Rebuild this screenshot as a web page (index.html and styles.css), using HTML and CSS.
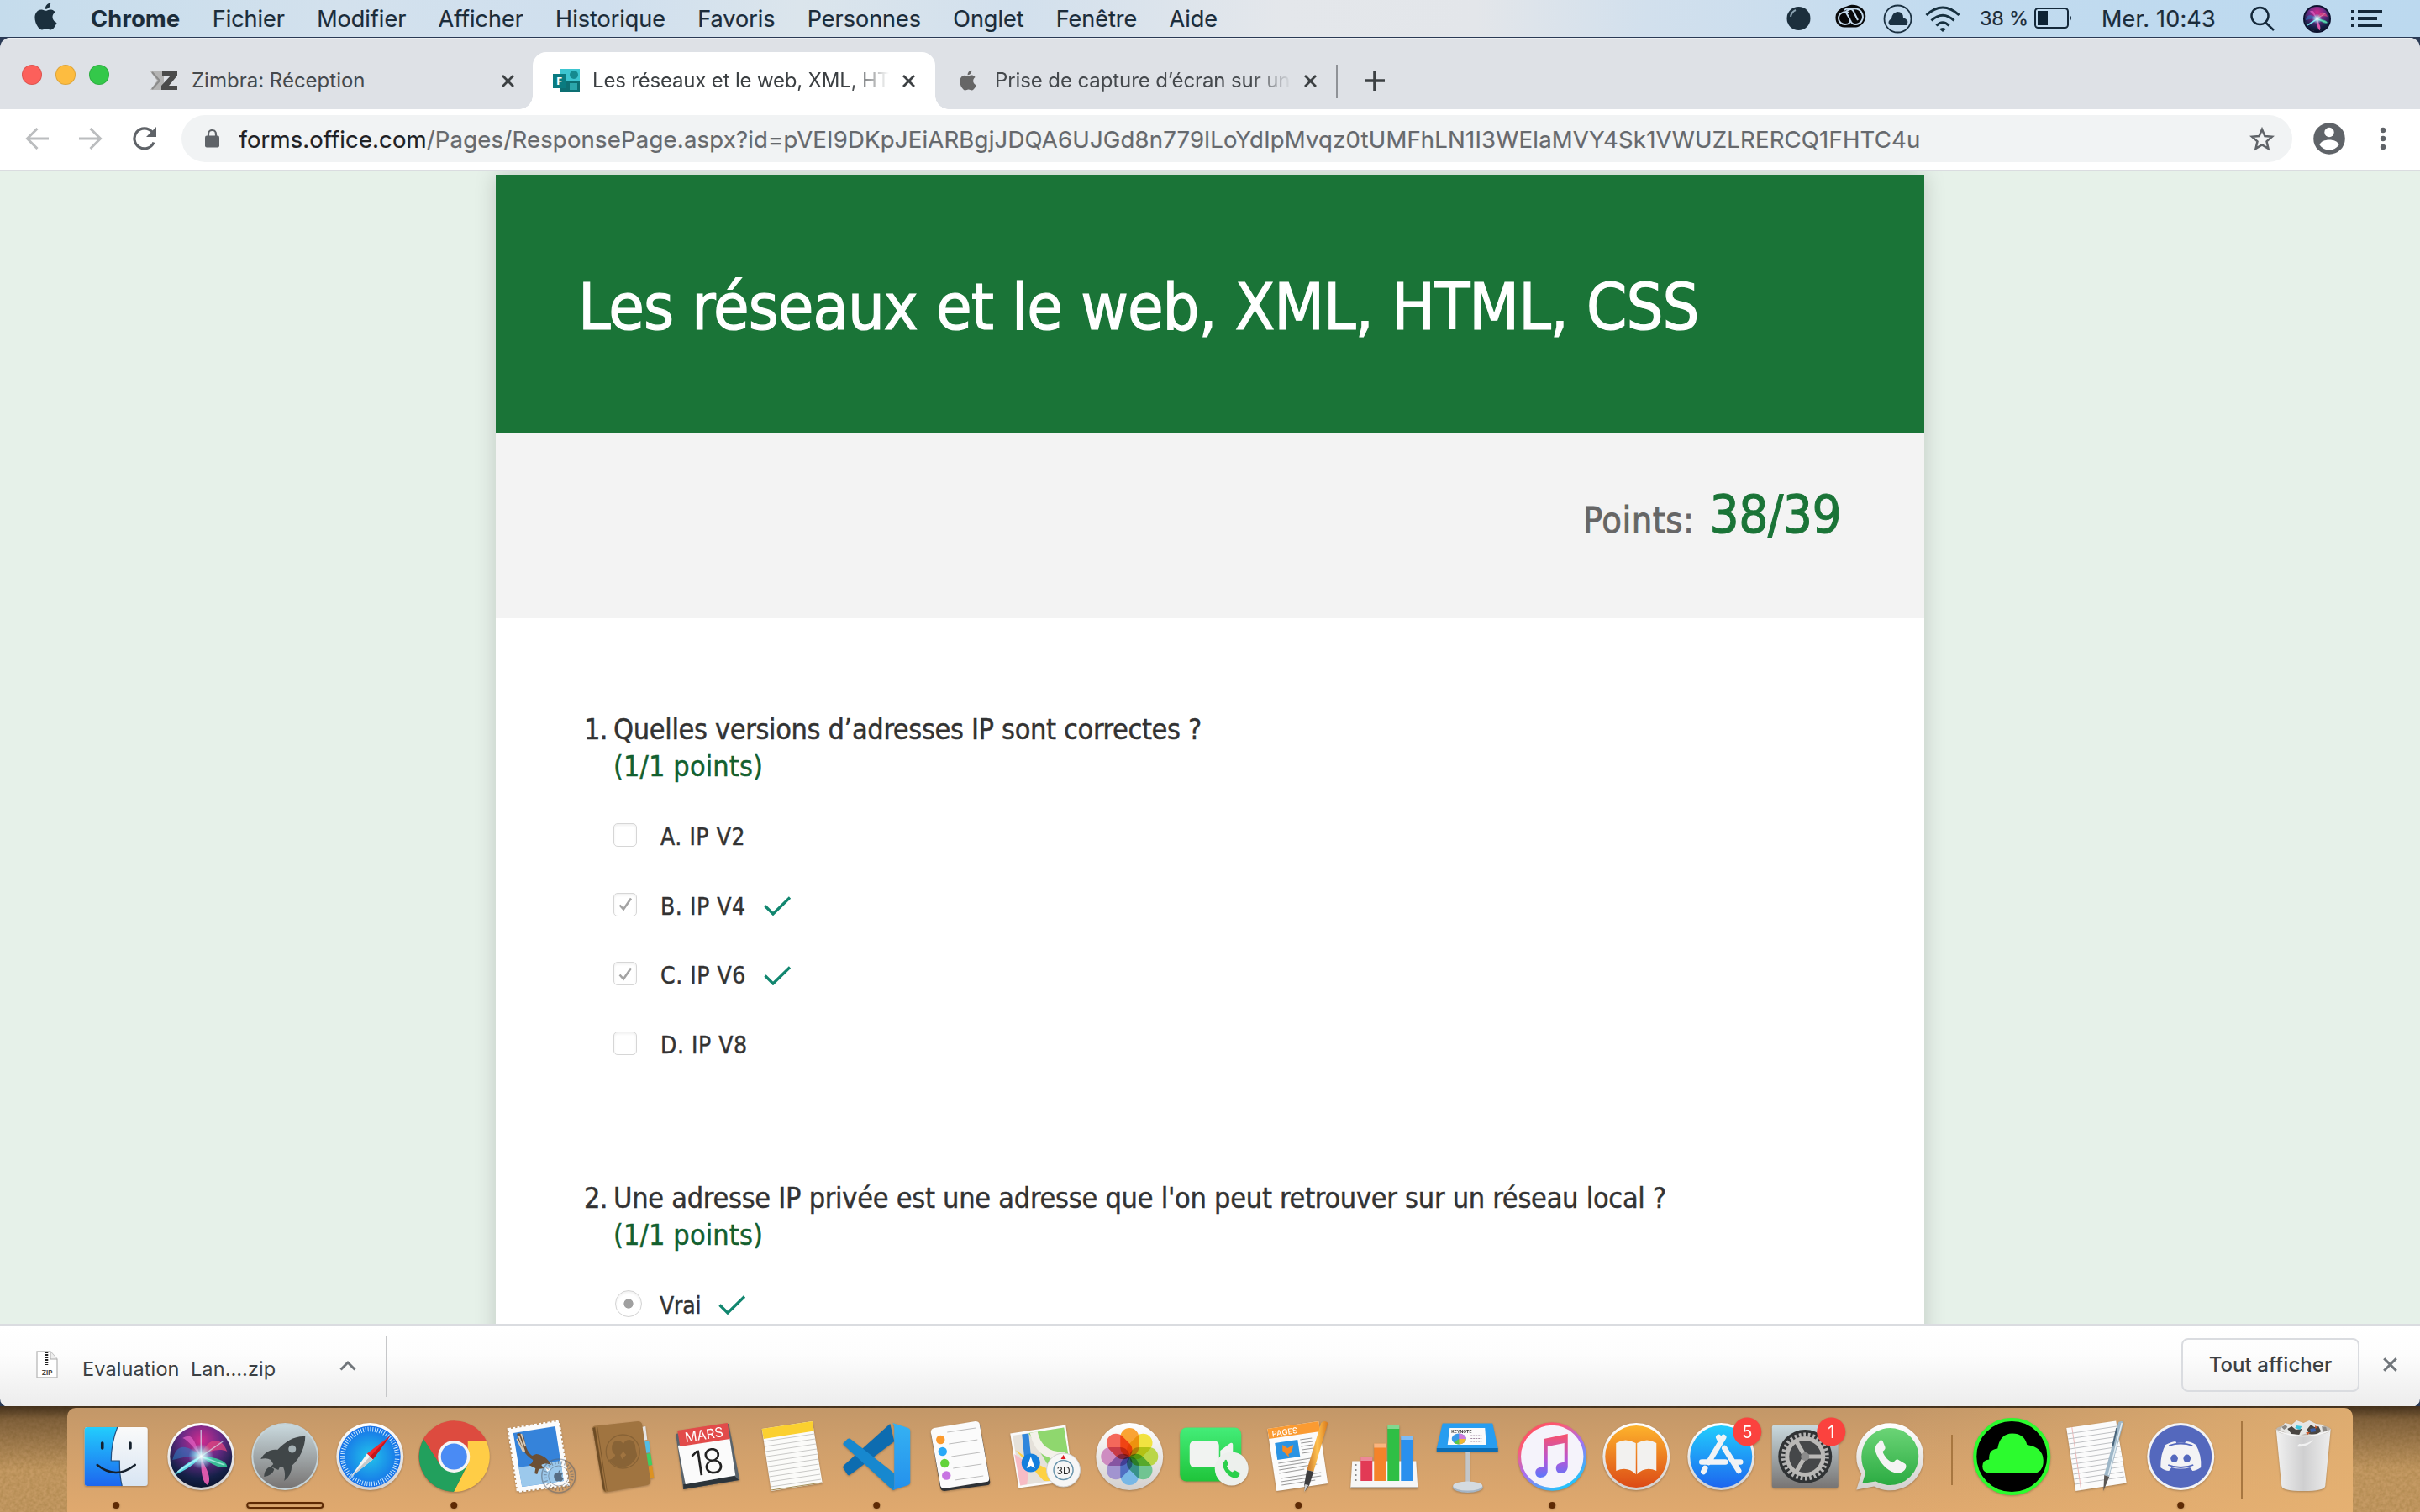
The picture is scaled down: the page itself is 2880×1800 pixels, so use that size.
FILE: index.html
```html
<!DOCTYPE html>
<html lang="fr">
<head>
<meta charset="utf-8">
<title>Les réseaux et le web, XML, HTML, CSS</title>
<link rel="stylesheet" href="styles.css">
</head>
<body>
<svg class="defs" width="0" height="0" aria-hidden="true">
  <defs>
    <path id="apple" d="M16.4 12.7c0-3 2.5-4.400 2.600-4.500-1.400-2.100-3.600-2.400-4.400-2.400-1.900-.2-3.700 1.100-4.600 1.100-1 0-2.400-1.100-4-1C3.900 5.900 2 7.100.9 9c-2.200 3.800-.6 9.400 1.600 12.500 1.100 1.500 2.300 3.200 4 3.100 1.600-.1 2.200-1 4.100-1s2.500 1 4.100 1c1.700 0 2.800-1.500 3.900-3.100 1.200-1.700 1.700-3.400 1.700-3.500 0 0-3.900-1.500-3.900-5.300zM13.300 3.600C14.100 2.500 14.700 1.100 14.500-.4c-1.200.1-2.800.8-3.600 1.900-.8.900-1.500 2.400-1.300 3.800 1.400.1 2.800-.7 3.700-1.700z"/>
    <path id="x" d="M2 2L15 15M15 2L2 15" fill="none" stroke="currentColor" stroke-width="2.800"/>
    <path id="tick" d="M1.500 11.500L11 21 31 1.500" fill="none" stroke="#11866f" stroke-width="3.300"/>
    <path id="phone" d="M-9-11c-3 2-4 5-2 10 3 7 8 13 15 15 4 1 8-1 9-4 .6-2 0-3-1-3.600l-5-3c-2-1-3 1-4.500 2.300-4-1.500-7-5-8.500-9 1-1 2.500-2 2-3.700l-2-5c-.5-1-2-1-3 0z"/>
    <linearGradient id="gBlue" x2="0" y2="1"><stop stop-color="#22cdfd"/><stop offset="1" stop-color="#1d66ef"/></linearGradient>
    <linearGradient id="gWhite" x2="0" y2="1"><stop stop-color="#fafafa"/><stop offset="1" stop-color="#d8e5f3"/></linearGradient>
    <linearGradient id="gGray" x2="0" y2="1"><stop stop-color="#c9d9de"/><stop offset="1" stop-color="#777473"/></linearGradient>
    <linearGradient id="gGreen" x2="0" y2="1"><stop stop-color="#43ed78"/><stop offset="1" stop-color="#1fc43a"/></linearGradient>
    <linearGradient id="gOrange" x2="0" y2="1"><stop stop-color="#fdb32c"/><stop offset="1" stop-color="#dc4a16"/></linearGradient>
    <linearGradient id="gWa" x2="0" y2="1"><stop stop-color="#6bd476"/><stop offset="1" stop-color="#2bab42"/></linearGradient>
    <linearGradient id="gRim" x2="0" y2="1"><stop stop-color="#fff"/><stop offset="1" stop-color="#d3d0ce"/></linearGradient>
    <linearGradient id="gRing" x2=".6" y2="1"><stop stop-color="#ff4b58"/><stop offset=".3" stop-color="#fb5b77"/><stop offset=".6" stop-color="#a96df0"/><stop offset="1" stop-color="#28c0fb"/></linearGradient>
    <linearGradient id="gNote" x2="0" y2="1"><stop stop-color="#f9526a"/><stop offset=".6" stop-color="#b456d8"/><stop offset="1" stop-color="#5b78fb"/></linearGradient>
    <linearGradient id="gCode" x2="0" y2="1"><stop stop-color="#35b2f3"/><stop offset="1" stop-color="#2490ec"/></linearGradient>
    <linearGradient id="gTrash"><stop stop-color="#f1f1f1"/><stop offset=".5" stop-color="#cfcfd0"/><stop offset="1" stop-color="#ededed"/></linearGradient>
    <linearGradient id="gPen"><stop stop-color="#c4742a"/><stop offset=".5" stop-color="#ffc14f"/><stop offset="1" stop-color="#d9791b"/></linearGradient>
    <radialGradient id="gSafari"><stop stop-color="#22c3ea"/><stop offset="1" stop-color="#1670e8"/></radialGradient>
    <radialGradient id="gSiri" cy=".25" r=".8"><stop stop-color="#d32c8e"/><stop offset=".4" stop-color="#6a2a86"/><stop offset=".75" stop-color="#152048"/><stop offset="1" stop-color="#081228"/></radialGradient>
    <radialGradient id="gGlow"><stop stop-color="#fff"/><stop offset=".4" stop-color="#bff" stop-opacity=".7"/><stop offset="1" stop-color="#7ef" stop-opacity="0"/></radialGradient>
    <g id="siri">
      <circle cx="50" cy="58" r="40" fill="url(#gRim)"/>
      <circle cx="50" cy="58" r="37" fill="url(#gSiri)"/>
      <path d="M50 58C30 40 20 45 16 62c8-2 22-6 34-4z" fill="#2a7fc4" opacity=".55"/>
      <path d="M50 58C40 36 40 30 28 36c6 2 14 12 22 22z" fill="#f06bd0" opacity=".6"/>
      <path d="M50 58c6-22 24-26 31-6-8-4-20-2-31 6z" fill="#e0467f" opacity=".75"/>
      <path d="M50 58c14 0 30 4 31 12-8 4-20-4-31-12z" fill="#37d59c" opacity=".85"/>
      <path d="M50 58c4 12 14 24 8 34-8-4-8-22-8-34z" fill="#ef5fb6" opacity=".9"/>
      <path d="M50 58C38 62 24 72 18 80c14-6 24-12 32-22z" fill="#5fe9f2" opacity=".9"/>
      <path d="M50 58L22 76M50 58L78 68M50 58L50 26M50 58L76 40" stroke="#d8ffff" stroke-width="1.500" opacity=".6"/>
      <circle cx="50" cy="58" r="15" fill="url(#gGlow)"/>
    </g>
  </defs>
</svg>

<div class="desktop">
  <header class="menubar">
    <svg class="menu-apple" width="28" height="36" viewBox="-.5 -1 22 27" fill="#1b2f3d"><use href="#apple"/></svg>
    <nav class="menus">
      <b class="app-name">Chrome</b><span>Fichier</span><span>Modifier</span><span>Afficher</span><span>Historique</span><span>Favoris</span><span>Personnes</span><span>Onglet</span><span>Fenêtre</span><span>Aide</span>
    </nav>
    <div class="status">
      <svg class="st-ball" width="29" height="30" viewBox="0 0 29 30"><circle cx="14.500" cy="15" r="14" fill="#1c2f3d"/><path d="M5 13q1-6 6-8" fill="none" stroke="#8da4b3" stroke-width="2"/></svg>
      <svg class="st-cc" width="39" height="30" viewBox="0 0 39 30"><path d="M15 2.500c5-3 12-2 16 1 5 3 7 8 6 13s-5 10-11 11H12C5 27 1 22 1.500 15 2 8 8 4 15 2.500z" fill="#08090a"/><g fill="none" stroke="#c4daec" stroke-width="2"><path d="M17 10c-6-2-12 1-12 7 0 4 4 7 8 7 5 0 7-3 5-7l-4-7"/><path d="M12 7c5-4 10-2 12 4l4 8M13 10c4-5 16-8 20 1 3 7-2 13-8 13-3 0-5-2-6-5"/></g></svg>
      <svg class="st-cloud" width="35" height="35" viewBox="0 0 35 35"><circle cx="17.500" cy="17.500" r="16" fill="none" stroke="#1b3142" stroke-width="1.800"/><path d="M8 25q-4-4 2-8 1-7 7-8 7 0 7 7 8 3 4 9z" fill="#1b3142"/></svg>
      <svg class="st-wifi" width="42" height="31" viewBox="0 0 42 31" fill="none" stroke="#16303f" stroke-width="3"><path d="M1.500 11Q21-7 40.500 11M7.500 17.500Q21 5 34.500 17.500M13.500 23.500Q21 16 28.500 23.500"/><path d="M17 27.500q4-3 8 0l-4 3.500z" fill="#16303f" stroke="none"/></svg>
      <span class="st-pct">38 %</span>
      <svg class="st-bat" width="46" height="26" viewBox="0 0 46 26"><rect x="1" y="1" width="39" height="23" rx="3.500" fill="none" stroke="#14283a" stroke-width="2"/><path d="M4 4h12v17H4z" fill="#0d2234"/><path d="M42 8.500q4 4 0 8z" fill="#14283a"/></svg>
      <span class="st-clock">Mer. 10:43</span>
      <svg class="st-search" width="29" height="30" viewBox="0 0 29 30" fill="none" stroke="#14283a" stroke-width="2.500"><circle cx="11.500" cy="12" r="10"/><path d="M18.500 20L28 29"/></svg>
      <svg class="st-siri" width="33" height="33" viewBox="9 17 82 82"><use href="#siri"/><circle cx="50" cy="58" r="38.500" fill="none" stroke="#0b1230" stroke-width="5"/></svg>
      <svg class="st-list" width="37" height="22" viewBox="0 0 37 22" fill="#14283a"><path d="M0 1h4v4H0zM8 1h29v4H8zM0 9h4v4H0zM8 9h23v4H8zM0 17h4v4H0zM8 17h29v4H8z"/></svg>
    </div>
  </header>

  <main class="window">
    <div class="tabstrip">
      <div class="lights"><i class="light red"></i><i class="light yellow"></i><i class="light green"></i></div>
      <div class="tab tab-one">
        <svg width="33" height="24" viewBox="0 0 33 24"><path d="M0 1h16v22H0l8-11z" fill="#b4b4b4"/><path d="M2 2l9 10-9 10" fill="none" stroke="#8b8b8b" stroke-width="2"/><path d="M14 1h18v5L22 18h10v5H13v-5L24 6H14z" fill="#4b4b4b"/></svg>
        <span class="tab-title">Zimbra: Réception</span>
        <svg class="tab-x" width="17" height="17"><use href="#x"/></svg>
      </div>
      <div class="tab tab-active">
        <svg width="32" height="28" viewBox="0 0 32 28"><path d="M8 0h24v14H8z" fill="#3dc5d0"/><path d="M8 14h24v14H8z" fill="#0d6f73"/><circle cx="25" cy="7" r="5" fill="#158a90"/><path d="M20 17h9v8h-9z" fill="#2ba6ab"/><path d="M0 6h16v17H0z" fill="#0a7b80"/><text x="4" y="19" class="forms-f">F</text></svg>
        <span class="tab-title faded">Les réseaux et le web, XML, HT</span>
        <svg class="tab-x" width="17" height="17"><use href="#x"/></svg>
      </div>
      <div class="tab tab-three">
        <svg width="21" height="26" viewBox="-.5 -1 22 27" fill="#666"><use href="#apple"/></svg>
        <span class="tab-title faded">Prise de capture d’écran sur un</span>
        <svg class="tab-x" width="17" height="17"><use href="#x"/></svg>
      </div>
      <i class="tab-rule"></i>
      <svg class="new-tab" width="24" height="24" viewBox="0 0 24 24"><path d="M12 0v24M0 12h24" stroke="#3c4043" stroke-width="3.600"/></svg>
    </div>

    <div class="toolbar">
      <svg width="28" height="26" viewBox="0 0 28 26" fill="none" stroke="#bbbdbf" stroke-width="3"><path d="M28 13H3M14.500 1L2.500 13l12 12"/></svg>
      <svg width="28" height="26" viewBox="0 0 28 26" fill="none" stroke="#bbbdbf" stroke-width="3"><path d="M0 13h25M13.500 1l12 12-12 12"/></svg>
      <svg width="28" height="28" viewBox="0 0 28 28"><path d="M25 18.500A12 12 0 1 1 23 6" fill="none" stroke="#5f6368" stroke-width="3.200"/><path d="M28 0v12H16z" fill="#5f6368"/></svg>
      <div class="omnibox">
        <svg width="17" height="22" viewBox="0 0 17 22"><rect y="7.500" width="17" height="14" rx="2" fill="#5f6368"/><path d="M4 9V5.500a4.500 4.500 0 0 1 9 0V9" fill="none" stroke="#5f6368" stroke-width="2.200"/></svg>
        <span class="url"><span class="host">forms.office.com</span>/Pages/ResponsePage.aspx?id=pVEI9DKpJEiARBgjJDQA6UJGd8n779lLoYdIpMvqz0tUMFhLN1I3WElaMVY4Sk1VWUZLRERCQ1FHTC4u</span>
        <svg class="star" width="30" height="29" viewBox="0 0 30 29"><path d="M15 3l3.400 8 8.600.8-6.500 5.600 2 8.500L15 21.400l-7.500 4.500 2-8.500L3 11.800l8.600-.8z" fill="none" stroke="#5f6368" stroke-width="2.500"/></svg>
      </div>
      <svg class="avatar" width="38" height="38" viewBox="0 0 38 38"><circle cx="19" cy="19" r="18.800" fill="#5f6368"/><circle cx="19" cy="11.500" r="5.700" fill="#fff"/><path d="M7.500 26.500c2-8 21-8 23 0a14 14 0 0 1-23 0z" fill="#fff"/></svg>
      <svg class="kebab" width="8" height="28" viewBox="0 0 8 28" fill="#5f6368"><circle cx="4" cy="4" r="3.200"/><circle cx="4" cy="14" r="3.200"/><circle cx="4" cy="24" r="3.200"/></svg>
    </div>

    <div class="page">
      <article class="form">
        <h1 class="form-title">Les réseaux et le web, XML, HTML, CSS</h1>
        <div class="score"><span class="score-label">Points:</span><span class="score-value">38/39</span></div>
        <div class="questions">
          <section class="question">
            <span class="num">1.</span>
            <div class="q-body">
              <div class="q-text q-one">Quelles versions d’adresses IP sont correctes ?</div>
              <div class="q-points">(1/1 points)</div>
              <ul class="options">
                <li><i class="box"></i><span class="opt">A. IP V2</span></li>
                <li><i class="box"><svg width="17" height="17" viewBox="0 0 17 17"><path d="M1.500 9.500l4.500 5L15 1.500" fill="none" stroke="#a3a3a3" stroke-width="2.600"/></svg></i><span class="opt">B. IP V4</span><svg width="33" height="23"><use href="#tick"/></svg></li>
                <li><i class="box"><svg width="17" height="17" viewBox="0 0 17 17"><path d="M1.500 9.500l4.500 5L15 1.500" fill="none" stroke="#a3a3a3" stroke-width="2.600"/></svg></i><span class="opt">C. IP V6</span><svg width="33" height="23"><use href="#tick"/></svg></li>
                <li><i class="box"></i><span class="opt">D. IP V8</span></li>
              </ul>
            </div>
          </section>
          <section class="question">
            <span class="num">2.</span>
            <div class="q-body">
              <div class="q-text">Une adresse IP privée est une adresse que l'on peut retrouver sur un réseau local ?</div>
              <div class="q-points">(1/1 points)</div>
              <ul class="options">
                <li><i class="radio"></i><span class="opt opt-word">Vrai</span><svg width="33" height="23"><use href="#tick"/></svg></li>
              </ul>
            </div>
          </section>
        </div>
      </article>
    </div>

    <footer class="downloads">
      <svg class="zip" width="26" height="33" viewBox="0 0 26 33"><path d="M1 1h16l8 9v22H1z" fill="#fff" stroke="#b9b9b9" stroke-width="1.300"/><path d="M17 1v9h8" fill="#eee" stroke="#aaa"/><path d="M12.500 1v16" stroke="#222" stroke-width="3.600" stroke-dasharray="2 1"/><text x="13" y="28.500" class="zip-t">ZIP</text></svg>
      <span class="file">Evaluation&nbsp; Lan….zip</span>
      <svg class="caret" width="20" height="13" viewBox="0 0 20 13"><path d="M1.500 11.500L10 3l8.500 8.500" fill="none" stroke="#70757a" stroke-width="3"/></svg>
      <i class="dl-rule"></i>
      <span class="show-all">Tout afficher</span>
      <svg class="dl-x" width="19" height="19" viewBox="0 0 17 17"><use href="#x"/></svg>
    </footer>
  </main>

  <div class="dock-area">
  <div class="dock">
    <svg class="ic" viewBox="0 0 100 124"><rect x="12.500" y="23" width="75" height="70" rx="3" fill="url(#gWhite)"/><path d="M15.500 23h36Q44 42 44 63h10q0 18 3 30H15.500a3 3 0 0 1-3-3V26a3 3 0 0 1 3-3z" fill="url(#gBlue)"/><path d="M51.500 23Q44 42 44 63h10q0 18 3 30" fill="none" stroke="#234e7d" stroke-width="1.200"/><path d="M33.500 42v6M66.700 42v6" stroke="#15202c" stroke-width="3.600" stroke-linecap="round"/><path d="M27.500 68q22 18 45 0" fill="none" stroke="#15202c" stroke-width="2.600" stroke-linecap="round"/><circle class="run" cx="50" cy="116" r="4"/></svg>
    <svg class="ic" viewBox="0 0 100 124"><use href="#siri"/></svg>
    <svg class="ic" viewBox="0 0 100 124"><circle cx="50" cy="58" r="40" fill="#c5d3d8"/><circle cx="50" cy="58" r="38" fill="url(#gGray)"/><path d="M74 34C62 33 50 40 41 50c-9-1-15 3-20 11q7-2 12 1l3 5-3 3 9 4 2-4 4 1q3 7 1 16 9-7 9-18C68 60 74 46 74 34z" fill="#404648"/><path d="M33 70c-5 1-8 6-8 12 6-1 11-4 12-9z" fill="#404648"/><circle cx="58.500" cy="49" r="4.500" fill="#a5b1b5"/><rect class="bounce" x="5" y="113" width="90" height="6" rx="3"/></svg>
    <svg class="ic" viewBox="0 0 100 124"><circle cx="50" cy="58" r="40" fill="url(#gRim)"/><circle cx="50" cy="58" r="36.500" fill="url(#gSafari)"/><circle cx="50" cy="58" r="32.500" fill="none" stroke="#d5efff" stroke-width="5.500" stroke-dasharray=".9 1.936"/><path d="M74.500 33L46.500 54.500l7 7z" fill="#f3262c"/><path d="M74.500 33L50 58l3.500 3.500z" fill="#c3151e"/><path d="M26.500 83L46.500 54.500l7 7z" fill="#f4f4f4"/><path d="M26.500 83L50 58l3.500 3.500z" fill="#c5c8ca"/></svg>
    <svg class="ic" viewBox="0 0 100 124"><circle cx="50" cy="58" r="42" fill="#dd4b3f"/><path d="M14 37A42 42 0 0 0 50 100L66.500 67.500 50 58 33.500 67.500z" fill="#22a05d"/><path d="M88 39A42 42 0 0 1 50 100L66.500 67.500V39z" fill="#ffcd46"/><path d="M50 39h38.500A42 42 0 0 0 14 37l19.500 30.500L50 58z" fill="#dd4b3f"/><circle cx="50" cy="58" r="19" fill="#f5f5f5"/><circle cx="50" cy="58" r="15.500" fill="#4a8bf4"/><circle class="run" cx="50" cy="116" r="4"/></svg>
    <svg class="ic" viewBox="0 0 100 124"><path d="M14 25.500L73.500 16 85 91.500 25 99.500z" fill="#fbfbfb" stroke="#fbfbfb" stroke-width="3" stroke-dasharray="3 2.200"/><path d="M19.500 30L69.500 22 79.500 87 30 94z" fill="#3583da"/><path d="M26 71l50-8 3.500 24L30 94z" fill="#9cc9ec"/><path d="M24 31c3-2 6 0 8 3l3 13c2 5 4 8 7 10l5-2c8 1 14 6 18 13-5-2-9-2-12 0l3 4-6 1-2 6-3-1 1-6-8-4c3-1 5-3 5-6-10-6-17-18-19-31z" fill="#6b4f35"/><path d="M26 33l7 19M29 31l5 15M24 37l8 16" stroke="#d8cab8" stroke-width="1.800"/><path d="M57 70l7 3-4 3z" fill="#fff"/><g fill="none" stroke="#566170" opacity=".5"><circle cx="73.500" cy="81" r="20" stroke-width="1.600"/><circle cx="73.500" cy="81" r="12" stroke-width="1"/><circle cx="73.500" cy="81" r="16" stroke-width="4" stroke-dasharray="1.300 2.600"/></g><g transform="translate(68 74) scale(.55)" fill="#46566a" opacity=".8"><use href="#apple"/></g></svg>
    <svg class="ic" viewBox="0 0 100 124"><path d="M72 23l5-1 2 16-5 1z" fill="#e6e6e6"/><path d="M75 40l6-1 2 14-6 1z" fill="#53bde4"/><path d="M77 55l6-1 2 14-6 1z" fill="#3fce60"/><path d="M79 70l6-1 2 14-6 2z" fill="#dc9222"/><path d="M14 24q0-2 3-2.500L68 16q4 0 5 4l10 67q0 4-4 5L30 100.500q-3 0-3.500-3z" fill="#a07440"/><path d="M14 24l3-1 12.500 77-3-3z" fill="#6d4c25"/><path d="M19.500 23L31 99" stroke="#7f5a2e"/><circle cx="50" cy="52" r="20" fill="none" stroke="#886336" stroke-width="1.300"/><path d="M33 62q7-2 8-6-5-3-4-11 2-7 8-6 6 1 6 8 0 6-4 9l2 5 5-5q-4-3-4-10 1-8 8-8 7 1 7 10l2 9q-5 12-17 14-10 0-17-9z" fill="#886336"/></svg>
    <svg class="ic" viewBox="0 0 100 124"><path d="M12 31L75 19 88 86 21 97z" fill="#59636b"/><path d="M21 91l61-10 5 5-66 11z" fill="#2c343a"/><path d="M14.500 45L76 36l7 44.500L23.500 91z" fill="#fbfbfb"/><path d="M14 27L73.500 18l3 19L17 46z" fill="#e24b4a"/><text transform="translate(46.500 37.500) rotate(-8.500)" class="cal-m">MARS</text><text transform="translate(50.500 79) rotate(-8.500)" class="cal-d">18</text></svg>
    <svg class="ic" viewBox="0 0 100 124"><path d="M14.500 25L74.500 16l12 73.500L25.500 99z" fill="#fbfbf9"/><path d="M14.500 25L74.500 16l2 11.500L16.500 37z" fill="#fbd02f"/><path d="M25 98l61-9" stroke="#a08a50"/><g stroke="#c9c9c7" stroke-width="1"><path d="M17 40l60-9M18 46l60-9M19 52l60-9M20 58l60-9M21 64l60-9M22 70l60-9M22.500 76l60-9M23 82l60-9M24 88l60-9M25 94l60-9"/></g></svg>
    <svg class="ic" viewBox="0 0 100 124"><path d="M10.500 72q-1-2 1-4L66 19l5 21-53 40q-2 1-3-1z" fill="#0d6cb0"/><path d="M10.500 44q-1-2 1-3l4-4q2-1 4 .5L71 78v20q-2 .5-4-2z" fill="#1788cf"/><path d="M69 18l18.500 6q2.500 1 2.500 3v62q0 2-2.500 3L69 98q2-2 2-5V24q0-4-2-6z" fill="url(#gCode)"/><circle class="run" cx="50" cy="116" r="4"/></svg>
    <svg class="ic" viewBox="0 0 100 124"><path d="M15 32q0-4 4-5l50-9q3 0 4 3l12 67q0 4-3 4l-51 7q-4 0-5-3z" fill="#2e3135"/><path d="M14.500 29q0-4 4-5l49-8q4 0 5 3l11.500 65q0 4-3 4l-50 8q-4 0-5-3z" fill="#fbfbfb"/><circle cx="26" cy="38" r="5.200" fill="#fc9a2c"/><circle cx="28.500" cy="52" r="5.200" fill="#29a9f8"/><circle cx="31" cy="66" r="5.200" fill="#62d33a"/><circle cx="33" cy="80.500" r="5.200" fill="#c774e2"/><path d="M34 29l34-5M36 43l34-5M39 58l34-5M41 72l34-5M43 86l34-5" stroke="#bdbdbd"/></svg>
    <svg class="ic" viewBox="0 0 100 124"><path d="M8 30.500L74 20.500l9 66L18 95.500z" fill="#fafafa"/><path d="M11 33L72 23.500 80.500 84 20 92.500z" fill="#e5e1da"/><path d="M30 30l42-6.500L78 62q-16-2-24 8z" fill="#8fd76e"/><path d="M36 29q6 30 38 28" fill="none" stroke="#f3f1ea" stroke-width="9"/><path d="M14 50l22 15 26 12v10H48z" fill="#fdd143"/><path d="M13 55l18 13-3 23-8 1.500z" fill="#f7bcc5"/><path d="M26 31l4 40" stroke="#2f86dc" stroke-width="8"/><circle cx="32.500" cy="65.500" r="11" fill="#147fdd"/><path d="M32.500 58l5 14-5-3-5 3z" fill="#fff"/><circle cx="71.300" cy="74" r="20" fill="#f6f6f6" stroke="#cfcfcf"/><circle cx="71.300" cy="74" r="11.500" fill="none" stroke="#6a95ad" stroke-width="1.500"/><path d="M71.300 56l3 5h-6z" fill="#e01b22"/><text x="71.300" y="78.500" class="map-t">3D</text></svg>
    <svg class="ic" viewBox="0 0 100 124"><circle cx="50" cy="58" r="40" fill="url(#gRim)"/><g class="petals"><rect x="39" y="24" width="22" height="34" rx="11" fill="#fa9a1e"/><rect x="39" y="24" width="22" height="34" rx="11" fill="#f1e02c" transform="rotate(45 50 58)"/><rect x="39" y="24" width="22" height="34" rx="11" fill="#b5d435" transform="rotate(90 50 58)"/><rect x="39" y="24" width="22" height="34" rx="11" fill="#64c18a" transform="rotate(135 50 58)"/><rect x="39" y="24" width="22" height="34" rx="11" fill="#6db4e8" transform="rotate(180 50 58)"/><rect x="39" y="24" width="22" height="34" rx="11" fill="#9a8ccf" transform="rotate(225 50 58)"/><rect x="39" y="24" width="22" height="34" rx="11" fill="#cb82bd" transform="rotate(270 50 58)"/><rect x="39" y="24" width="22" height="34" rx="11" fill="#f4584a" transform="rotate(315 50 58)"/></g></svg>
    <svg class="ic" viewBox="0 0 100 124"><rect x="9" y="23.500" width="73" height="64" rx="8" fill="url(#gGreen)"/><rect x="20.500" y="39" width="35" height="32" rx="6" fill="#f1f3f1"/><path d="M57 51l12-9q3-1 3 2v26L57 59z" fill="#f1f3f1"/><circle cx="70.500" cy="72.500" r="20" fill="#edf0ed"/><g transform="translate(69.500 72) scale(.8)" fill="#2bd04b"><use href="#phone"/></g></svg>
    <svg class="ic" viewBox="0 0 100 124"><path d="M13 25L74 16 85 90 24 99z" fill="#fbfbfb"/><path d="M13 25L74 16l2 12L15 37z" fill="#fb9b32"/><text transform="translate(19 34.500) rotate(-8.500)" class="pages-t">PAGES</text><path d="M22 42l27-4 3 20-27 4z" fill="#2a93e3"/><path d="M31 44l6 4 7-4-2 9-4 2 1 4-4-4-4-4z" fill="#f68a25"/><g stroke="#9a9a9a" stroke-width="1.200"><path d="M52 38l14-2M53 42l14-2M53 46l14-2M54 50l14-2M54 54l14-2M26 66l45-7M26 70l45-7M27 74l45-7M27 78l30-5M29 84l48-7M29 88l48-7M30 92l40-6"/></g><path d="M77 18q4-4 8 0L68 76l-8-2z" fill="url(#gPen)"/><path d="M60 74l8 2-5 16-5 7-1-8z" fill="#3c3c3e"/><path d="M58 91l4 1-5 8z" fill="#ccc"/><circle class="run" cx="50" cy="116" r="4"/></svg>
    <svg class="ic" viewBox="0 0 100 124"><path d="M13 63.500h76L91 95H11z" fill="#f6f6f6"/><path d="M11 94h80v2H11z" fill="#bdb6ae"/><path d="M23 58h14v29H23z" fill="#e23a55"/><path d="M39 42.500h14V87H39z" fill="#f5832a"/><path d="M55 21h14v66H55z" fill="#2fbf45"/><path d="M71 34h14v53H71z" fill="#2a90ee"/><path d="M23 58h14v5H23zM39 42.500h14v5H39zM55 21h14v4H55zM71 34h14v4H71z" fill="#fff" opacity=".4"/><path d="M17 67v24" stroke="#888" stroke-width="2.500" stroke-dasharray="2 4"/></svg>
    <svg class="ic" viewBox="0 0 100 124"><path d="M48 50h5v43h-5z" fill="#c3c6c9"/><ellipse cx="50.500" cy="94.500" rx="18" ry="6.500" fill="#a4b4c4"/><ellipse cx="50.500" cy="93" rx="17.500" ry="5.500" fill="#d4dbe1"/><path d="M20.500 18.500H80l6.500 30h-73z" fill="#279df0"/><path d="M13.500 48h73v4h-73z" fill="#0c6db4"/><path d="M31 23h42l2 29.500" fill="none"/><path d="M30 25h42l1.500 27.500" fill="none"/><path d="M28 24.500h43l2 29" fill="none"/><path d="M30 25.500h40l2 27" fill="none"/><path d="M29 24h42l1.500 20H26.500z" fill="#fbfbfb"/><text x="31" y="29.500" class="key-t">KEYNOTE</text><ellipse cx="40" cy="37" rx="8.500" ry="6.500" fill="#3a9ae8"/><path d="M40 37v-6.500a8.500 6.500 0 0 1 8.500 6.500z" fill="#d07ad8"/><path d="M40 37h8.500a8.500 6.500 0 0 1-8.500 6.500z" fill="#f2b632"/><path d="M40 43.500a8.500 6.500 0 0 1-6-2l6-4.500z" fill="#5ec644"/><path d="M54 33h13M54 36.500h13M54 40h13" stroke="#a08aa0" stroke-dasharray="2 1"/></svg>
    <svg class="ic" viewBox="0 0 100 124"><circle cx="50" cy="58" r="39" fill="#f5f3fb" stroke="url(#gRing)" stroke-width="3.600"/><path d="M40 37l28.500-6v39c0 5-4 8-8 8s-6-3-6-6c0-5 4-7 10-7V42l-20 4v29c0 5-4 8-8.500 8-4 0-6-3-6-6 0-5 5-7 10-7z" fill="url(#gNote)"/><circle class="run" cx="50" cy="116" r="4"/></svg>
    <svg class="ic" viewBox="0 0 100 124"><circle cx="50" cy="58" r="40" fill="url(#gRim)"/><circle cx="50" cy="58" r="37" fill="url(#gOrange)"/><path d="M26 42q11-7 23.500 0v37q-10-10-23.500-4zM51 42q12-7 23 0v33q-13-6-23 4z" fill="#f2f1ef"/></svg>
    <svg class="ic" viewBox="0 0 100 124"><circle cx="50" cy="58" r="40" fill="url(#gRim)"/><circle cx="50" cy="58" r="37" fill="url(#gBlue)"/><g stroke="#f1f3f5" stroke-width="6.500" stroke-linecap="round"><path d="M53 35L35 65M47 35l2 4M54 48l17 27M27 64.500h28M67 64.500h6M31 72l-2 4"/></g><circle cx="81" cy="28.500" r="17" class="badge"/><text x="81" y="35.500" class="badge-t">5</text></svg>
    <svg class="ic" viewBox="0 0 100 124"><rect x="10.500" y="20.500" width="79" height="75" rx="3" fill="url(#gGray)"/><circle cx="50" cy="58" r="32" fill="#303335"/><circle cx="50" cy="58" r="26" fill="none" stroke="#b4b4b4" stroke-width="5" stroke-dasharray="2.700 2.745"/><circle cx="50" cy="58" r="21.500" fill="#454749" stroke="#b9b8b6" stroke-width="5"/><path d="M50 58h22M50 58L39 39M50 58L39 77" stroke="#b9b8b6" stroke-width="5"/><circle cx="50" cy="58" r="5" fill="#8b8b8b"/><circle cx="81" cy="28.500" r="17" class="badge"/><text x="81" y="35.500" class="badge-t">1</text></svg>
    <svg class="ic" viewBox="0 0 100 124"><path d="M10 97.500l6-19q-6-9-6-20a40 40 0 1 1 21 35z" fill="url(#gRim)"/><path d="M17 90l4-13q-5-8-5-19a34 34 0 1 1 17 29.500z" fill="url(#gWa)"/><g transform="translate(50 57) scale(1.450)" fill="#f4f4f4"><use href="#phone"/></g></svg>
    <i class="dock-rule short"></i>
    <svg class="ic" viewBox="0 0 100 124"><circle cx="50" cy="58" r="44" fill="#000" stroke="#2cfb2e" stroke-width="4"/><path d="M23 78q-8-1-8-8.500t8-8q-1-12 10-13 3-18 17.500-18T68 44q19 3 19.500 18T75 78z" fill="#2cfb2e"/></svg>
    <svg class="ic" viewBox="0 0 100 124"><path d="M14 24L73 15.500l12.500 74L25 99z" fill="#fbfbfb"/><path d="M20.500 23l11 75" stroke="#f0b9b9"/><g stroke="#bfc1c4" stroke-width="1.100"><path d="M15 31l59-9M16 37l59-9M17 43l59-9M18 49l59-9M19 55l59-9M20 61l59-9M21 67l59-9M21.500 73l59-9M22 79l59-9M23 85l59-9M24 91l59-9"/></g><path d="M76 17q3-2 6 0L65 82l-6-2z" fill="#9eb7c8"/><path d="M80 18L64 80" stroke="#e3edf3" stroke-width="1.500"/><path d="M74 24l-5 22" stroke="#49647a" stroke-width="2"/><path d="M59 80l6 2-7 17z" fill="#5b5754"/></svg>
    <svg class="ic" viewBox="0 0 100 124"><circle cx="50" cy="58" r="40" fill="#f3f3f5"/><circle cx="50" cy="58" r="37" fill="#5468bd"/><path d="M32 44q8-4 12-4l1 2q5-1 10 0l1-2q6 0 12 4 7 12 6 27-6 4-10 4l-3-4q-11 3-22 0l-3 4q-5 0-10-4 0-17 6-27z" fill="#f3f3f5"/><path d="M36 45q14-5 28 0M35 68q15 6 30 0" fill="none" stroke="#5468bd" stroke-width="1.800"/><ellipse cx="42.300" cy="60.300" rx="4.300" ry="4.800" fill="#5468bd"/><ellipse cx="57.500" cy="60.300" rx="4.300" ry="4.800" fill="#5468bd"/><circle class="run" cx="50" cy="116" r="4"/></svg>
    <i class="dock-rule"></i>
    <svg class="ic" viewBox="0 0 100 124"><path d="M17.500 25h65L76 93q-1 6-26 6t-26-6z" fill="url(#gTrash)"/><ellipse cx="50" cy="26" rx="32.500" ry="7" fill="#bdb6ae"/><path d="M22 26l6-8 8 2 6-5 8 3 7-3 8 4 8 1 5 7-9 5-14-2-10 3-12-1z" fill="#e6e6e4"/><path d="M31 25l5-3 5 4 7-1-3 7-9-1zM54 26l5-6 4 3 5-1 3 6-6 4-8-1z" fill="#4a4642"/><path d="M24 23l5-3 2 3-4 3zM72 22l5 1 1 4-5 2z" fill="#8b8884"/><path d="M42 21l6 1-2 4-6-2z" fill="#3cc4dc"/><path d="M58 25l6-1 1 4-6 1z" fill="#3a5fa8"/><path d="M53 29l5 0-3 3zM64 21l3 2-3 2z" fill="#c9572a"/><path d="M42 46q12 2 20-8-8 6-17 5z" fill="#fff" opacity=".7"/><path d="M18 27q32 13 64 0" fill="none" stroke="#f5f5f5" stroke-width="1.500"/></svg>
  </div>
  </div>
</div>
</body>
</html>
```
FILE: styles.css
```css
* { box-sizing: border-box; }
body { margin: 0; font-family: Inter, "Liberation Sans", sans-serif; color: #3c4043; }
svg { display: block; flex: none; }
.defs { position: absolute; }
i { display: block; flex: none; }

.desktop { width: 2880px; height: 1800px; overflow: hidden; display: flex; flex-direction: column; background: #2a3a55; }

/* macOS menu bar */
.menubar {
  height: 44px; flex: none; display: flex; align-items: center; padding: 0 45px 0 41px;
  background: linear-gradient(90deg, #c5dcec 0, #d3e1ed 14%, #cfdfee 25%, #dbe5ec 33%, #d2e0ed 42%, #e4e7eb 53%, #e3e6ea 61%, #d2e0ed 68%, #c2dbef 80%, #bcd9ef 100%);
  color: #1b2c3a; font-size: 27px; line-height: 44px; white-space: nowrap;
}
.menu-apple { margin: -4px 39px 0 0; }
.menus { display: flex; gap: 38.200px; padding-top: 1px; -webkit-text-stroke: .2px #1b2c3a; }
.app-name { font-weight: 700; letter-spacing: .35px; }
.status { margin-left: auto; display: flex; align-items: center; -webkit-text-stroke: .2px #1b2c3a; }
.st-ball { -webkit-text-stroke: 0; }
.st-cc { margin-left: 28px; margin-top: -4px; }
.st-cloud { margin-left: 19px; }
.st-wifi { margin-left: 15px; }
.st-pct { margin-left: 23px; width: 65px; font-size: 23.5px; letter-spacing: -.2px; }
.st-clock { margin: 1px 0 0 34px; width: 137px; letter-spacing: .2px; }
.st-search { margin-left: 40px; }
.st-siri { margin-left: 34px; }
.st-list { margin-left: 24px; }

/* Browser window */
.window { height: 1630px; flex: none; display: flex; flex-direction: column; margin-top: 1px; overflow: hidden; border-radius: 12px 12px 10px 10px; }
.tabstrip { height: 85px; flex: none; display: flex; align-items: flex-end; background: #dee1e6; border-top: 2px solid #eef0f2; }
.lights { display: flex; gap: 16px; padding: 0 0 29px 26px; width: 179px; }
.light { width: 24px; height: 24px; border-radius: 50%; border: 1px solid rgba(0, 0, 0, .12); }
.red { background: #fc605b; }
.yellow { background: #fdbc40; }
.green { background: #34c84a; }
.tab { height: 68px; display: flex; align-items: center; font-size: 24px; line-height: 68px; color: #45494d; white-space: nowrap; }
.tab-one { width: 455px; }
.tab-one .tab-title { margin-left: 16px; width: 368px; }
.tab-active { position: relative; width: 479px; padding-left: 24px; background: #fff; border-radius: 16px 16px 0 0; color: #3c4043; }
.tab-active::before, .tab-active::after { content: ""; position: absolute; bottom: 0; width: 16px; height: 16px; }
.tab-active::before { left: -16px; background: radial-gradient(circle at 0 0, transparent 15.500px, #fff 16px); }
.tab-active::after { right: -16px; background: radial-gradient(circle at 100% 0, transparent 15.500px, #fff 16px); }
.tab-active .tab-title { margin-left: 15px; width: 353px; letter-spacing: -.18px; }
.tab-active .tab-x { margin-left: 15px; }
.tab-three { width: 477px; padding-left: 29px; }
.tab-three .tab-title { margin-left: 21px; width: 353px; letter-spacing: -.1px; }
.tab-three .tab-x { margin-left: 14px; }
.faded { -webkit-mask-image: linear-gradient(90deg, #000 87%, transparent); mask-image: linear-gradient(90deg, #000 87%, transparent); }
.tab-x { color: #3c4043; }
.tab-rule { width: 2px; height: 40px; background: #8f9297; margin-bottom: 13px; }
.new-tab { margin: 0 0 22px 32px; }
.forms-f { font: 700 13px "Open Sans", sans-serif; fill: #fff; }

.toolbar { height: 74px; flex: none; display: flex; align-items: center; padding: 0 40px 2px 30px; gap: 36px; background: #fff; border-bottom: 2px solid #dadce0; }
.toolbar > svg:nth-child(3) { margin-right: -6px; }
.omnibox { width: 2512px; height: 56px; flex: none; border-radius: 28px; background: #f1f3f4; display: flex; align-items: center; padding: 0 21px 0 28px; }
.url { margin: 1px 0 0 23.500px; font-size: 27.500px; line-height: 56px; letter-spacing: .21px; color: #66696d; white-space: nowrap; -webkit-text-stroke: .2px currentColor; }
.host { color: #202124; letter-spacing: .1px; }
.star { margin-left: auto; }
.avatar { margin-left: -11px; }
.kebab { margin-left: 5px; }

/* Quiz page */
.page { height: 1372px; flex: none; overflow: hidden; background: #e6f1e9; padding-top: 4px; display: flex; justify-content: center; font-family: "DejaVu Sans Condensed", "DejaVu Sans", sans-serif; font-stretch: condensed; -webkit-text-stroke: .45px currentColor; }
.form { width: 1700px; height: 1500px; background: #fff; box-shadow: 0 0 24px rgba(0, 0, 0, .17); color: #333; }
.form-title { margin: 0; height: 308px; padding: 7px 0 0 98px; background: #1a7437; color: #fff; font-size: 77px; font-weight: 400; line-height: 301px; letter-spacing: -.98px; word-spacing: 1.200px; white-space: nowrap; -webkit-text-stroke: 1.200px #fff; }
.score { height: 220px; background: #f3f3f3; display: flex; justify-content: flex-end; align-items: baseline; gap: 18px; padding: 57px 99px 0 0; line-height: 80px; }
.score-label { font-size: 43px; color: #666; letter-spacing: .5px; -webkit-text-stroke-width: .8px; }
.score-value { font-size: 61.500px; color: #1a7437; letter-spacing: -.6px; -webkit-text-stroke-width: 1px; }
.questions { padding: 110px 0 0 105px; }
.question { height: 558px; display: flex; font-size: 34px; line-height: 44px; white-space: nowrap; }
.num { width: 35px; letter-spacing: -.8px; }
.q-text { letter-spacing: -.27px; }
.q-one { letter-spacing: -.35px; }
.q-points { color: #13602f; letter-spacing: .1px; }
.options { list-style: none; margin: 21px 0 0; padding: 0; font-size: 28px; }
.options li { height: 82.700px; display: flex; align-items: center; }
.options li > svg { margin: -1px 0 0 21px; }
.box { width: 28px; height: 28px; margin-top: -5px; border: 1.500px solid #d6d6d6; border-radius: 5px; box-shadow: inset 0 2px 3px rgba(0, 0, 0, .06); display: flex; align-items: center; justify-content: center; }
.radio { width: 32px; height: 32px; margin: -4px 0 0 2px; border: 1.500px solid #d3d3d3; border-radius: 50%; background: radial-gradient(circle, #a0a0a0 5.200px, #fff 6px); box-shadow: inset 0 2px 3px rgba(0, 0, 0, .06); }
.opt { margin: 1px 0 0 28px; letter-spacing: .55px; }
.radio + .opt { margin-left: 21px; letter-spacing: -.2px; }

/* Download shelf */
.downloads { flex: 1; display: flex; align-items: center; padding: 0 26px 0 43px; border-top: 2px solid #dadce0; background: linear-gradient(#fff, #fdfdfd 35%, #ececec); }
.zip { margin-top: -4px; }
.zip-t { font: 700 8px Inter, sans-serif; text-anchor: middle; fill: #444; }
.file { margin: 5px 0 0 29px; width: 306px; font-size: 23.500px; letter-spacing: .1px; white-space: nowrap; }
.caret { margin-top: -2px; }
.dl-rule { margin-left: 35px; width: 2px; height: 72px; background: #c6c7c9; }
.show-all { margin: -4px 27px 0 auto; width: 212px; height: 64px; border: 2px solid #dadce0; border-radius: 8px; text-align: center; font-size: 24px; line-height: 59px; font-weight: 500; letter-spacing: .05px; }
.dl-x { color: #70757a; margin-top: -4px; }

/* Dock over the sand wallpaper */
.dock-area {
  height: 126px; flex: none; margin-top: -1px; padding: 2px 80px 0;
  background-color: #c59a64;
  background-image: linear-gradient(rgba(45, 30, 15, .85), rgba(60, 40, 20, .5) 12%, rgba(60, 40, 20, 0) 60%),
    url("data:image/svg+xml,%3Csvg xmlns='http://www.w3.org/2000/svg' width='160' height='126'%3E%3Cfilter id='n'%3E%3CfeTurbulence type='fractalNoise' baseFrequency='.25' numOctaves='3'/%3E%3CfeColorMatrix values='0 0 0 0 .35 0 0 0 0 .2 0 0 0 0 .05 .9 0 0 0 -.25'/%3E%3C/filter%3E%3Crect width='160' height='126' filter='url(%23n)'/%3E%3C/svg%3E");
}
.dock { height: 124px; display: flex; padding-left: 8px; border-radius: 10px 10px 0 0; background: linear-gradient(90deg, rgba(232, 180, 115, 0) 80%, rgba(232, 180, 115, .7)), linear-gradient(#c39768, #cf9f6b 35%, #e0a96e); }
.ic { width: 100.500px; height: 124px; overflow: visible; filter: drop-shadow(0 1px 1px rgba(0, 0, 0, .25)); }
.run { fill: #5e2a04; }
.bounce { fill: none; stroke: #5e2a04; stroke-width: 2px; }
.dock-rule { width: 2px; height: 92px; margin: 16px 22px 0 21.500px; background: #a87740; }
.dock-rule.short { height: 60px; margin: 32px 20px 0 23px; }
.petals { isolation: isolate; }
.petals rect { mix-blend-mode: multiply; opacity: .9; }
.badge { fill: #fb423e; }
.badge-t { font: 400 20px Inter, sans-serif; fill: #fff; text-anchor: middle; }
.cal-m { font: 400 16px Inter, sans-serif; fill: #fff; text-anchor: middle; }
.cal-d { font: 300 41px Inter, sans-serif; fill: #222; text-anchor: middle; letter-spacing: -2px; }
.map-t { font: 400 12px Inter, sans-serif; fill: #222; text-anchor: middle; }
.pages-t { font: 500 9.500px Inter, sans-serif; fill: #fff; }
.key-t { font: 700 5px Inter, sans-serif; fill: #333; }
```
